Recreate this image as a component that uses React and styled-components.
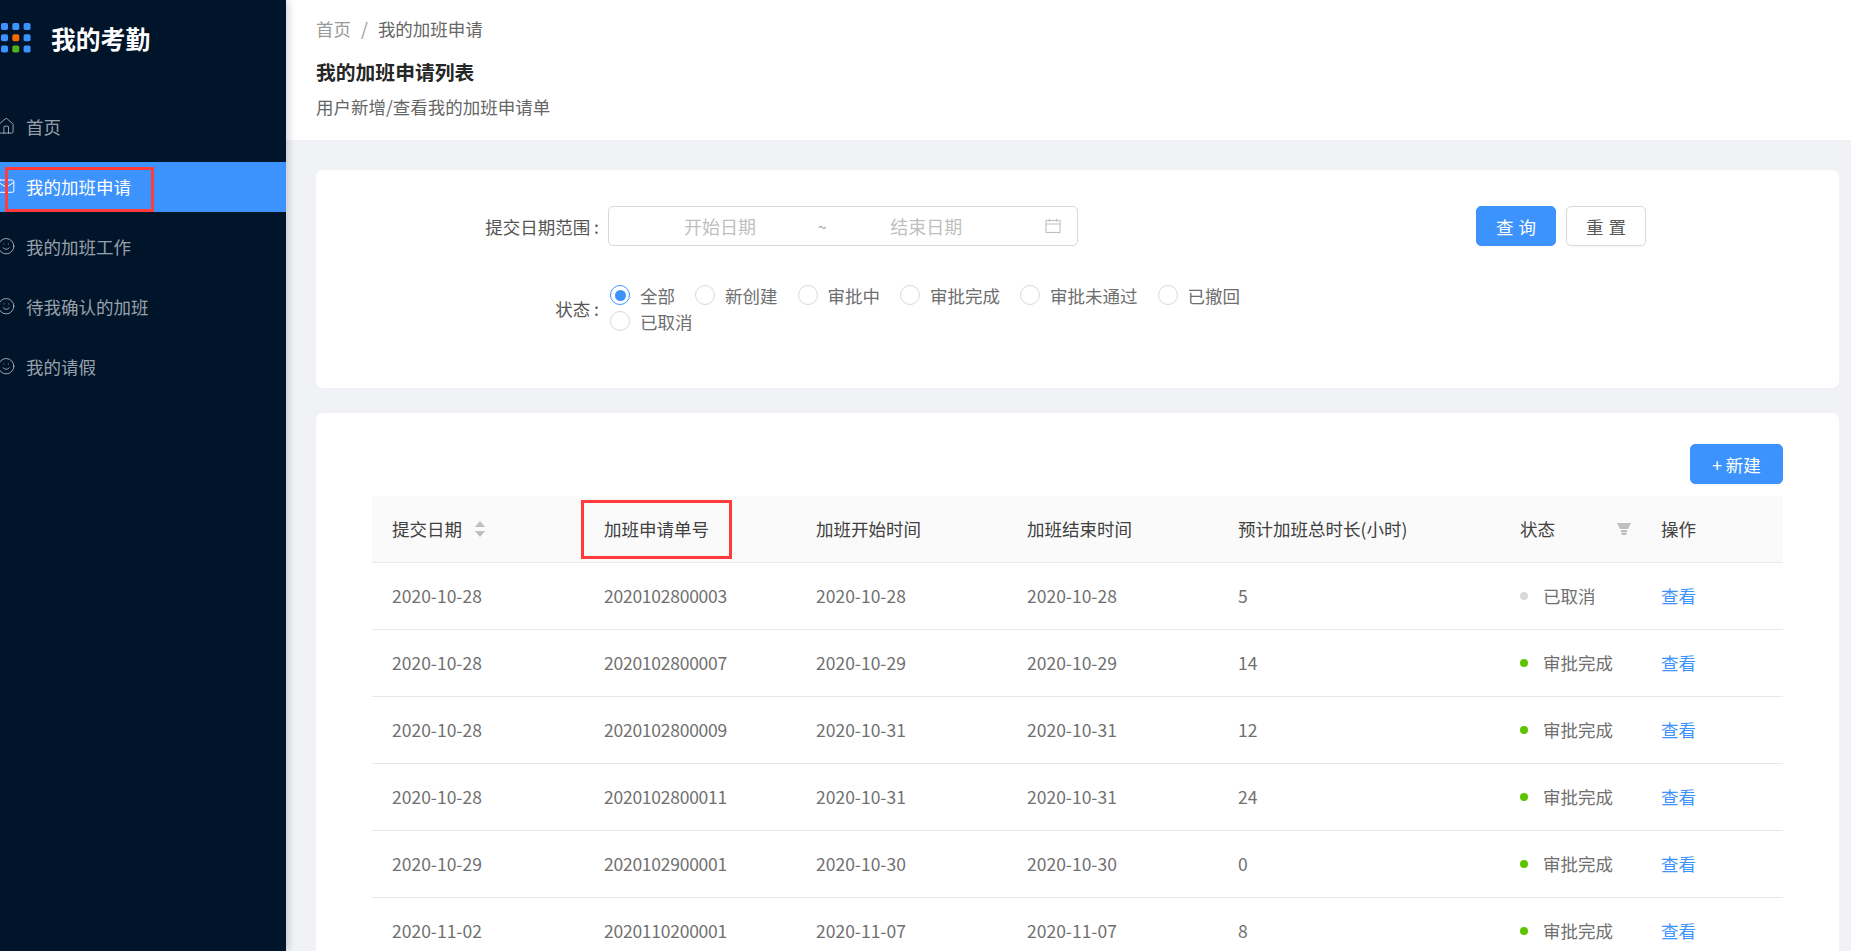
import React from "react";
import styled, { createGlobalStyle } from "styled-components";
import { House, Mail, Smile } from "lucide-react";

const GlobalStyle = createGlobalStyle`
  html, body {
    margin: 0;
    padding: 0;
    height: 100%;
    overflow: hidden;
    background: #f0f2f5;
    font-family: "Noto Sans CJK SC", "Noto Sans", sans-serif;
    font-size: 17.5px;
    color: #666;
  }
  * {
    box-sizing: border-box;
  }
`;

const menuItems = [
  { label: "首页", icon: House },
  { label: "我的加班申请", icon: Mail, active: true },
  { label: "我的加班工作", icon: Smile },
  { label: "待我确认的加班", icon: Smile },
  { label: "我的请假", icon: Smile },
];

const statusOptions = ["全部", "新创建", "审批中", "审批完成", "审批未通过", "已撤回", "已取消"];

const columnWidths = [212, 212, 211, 211, 282, 141, 142];

const rows = [
  ["2020-10-28", "2020102800003", "2020-10-28", "2020-10-28", "5", "已取消"],
  ["2020-10-28", "2020102800007", "2020-10-29", "2020-10-29", "14", "审批完成"],
  ["2020-10-28", "2020102800009", "2020-10-31", "2020-10-31", "12", "审批完成"],
  ["2020-10-28", "2020102800011", "2020-10-31", "2020-10-31", "24", "审批完成"],
  ["2020-10-29", "2020102900001", "2020-10-30", "2020-10-30", "0", "审批完成"],
  ["2020-11-02", "2020110200001", "2020-11-07", "2020-11-07", "8", "审批完成"],
];

const Layout = styled.div`
  display: flex;
  width: 100%;
  height: 100vh;
  overflow: hidden;
`;

const Sidebar = styled.aside`
  flex: 0 0 286px;
  background: #00142a;
  box-shadow: 2px 0 8px rgba(0, 21, 41, 0.2);
  position: relative;
  z-index: 2;
`;

const Brand = styled.div`
  display: flex;
  align-items: center;
  gap: 20px;
  height: 76px;
  padding-left: 1px;
`;

const BrandName = styled.div`
  font-size: 24.8px;
  font-weight: 700;
  color: #fff;
`;

const Menu = styled.nav`
  display: flex;
  flex-direction: column;
  gap: 10px;
  padding-top: 26px;
`;

const MenuItem = styled.div`
  position: relative;
  display: flex;
  align-items: center;
  gap: 10.6px;
  height: 50px;
  padding-bottom: 2px;
  background: ${(p) => (p.$active ? "#3d93fd" : "transparent")};
  color: ${(p) => (p.$active ? "#fff" : "rgba(255, 255, 255, 0.6)")};

  svg {
    flex: none;
    margin-left: -3px;
    width: 18.4px;
    height: 18.4px;
    stroke-width: 1.3;
  }
`;

const Highlight = styled.span`
  position: absolute;
  border: 3px solid #ff3b3b;
  pointer-events: none;
  left: ${(p) => p.$left}px;
  top: ${(p) => p.$top}px;
  width: ${(p) => p.$width}px;
  height: ${(p) => p.$height}px;
`;

const Main = styled.main`
  flex: 1;
  min-width: 0;
  display: flex;
  flex-direction: column;
`;

const PageHeader = styled.header`
  flex: 0 0 140px;
  padding: 16px 30px 0;
  background: #fff;
`;

const Breadcrumb = styled.div`
  display: flex;
  gap: 10px;
  line-height: 26px;
  color: #666;
`;

const Crumb = styled.span`
  color: ${(p) => (p.$muted ? "#999" : "#666")};
`;

const PageTitle = styled.h1`
  margin: 15px 0 0;
  font-size: 19.8px;
  line-height: 29px;
  font-weight: 700;
  color: #262626;
`;

const PageDesc = styled.div`
  margin-top: 8px;
  line-height: 26px;
  color: #666;
`;

const Content = styled.div`
  flex: 1;
  min-height: 0;
  display: flex;
  flex-direction: column;
  gap: 25px;
  padding: 30px 12px 0 30px;
`;

const Card = styled.section`
  background: #fff;
  border-radius: 7px;
`;

const FilterCard = styled(Card)`
  flex: none;
  padding: 36px 0 54px;
  display: flex;
  flex-direction: column;
  gap: 36px;
`;

const FormRow = styled.div`
  display: flex;
  align-items: center;
`;

const FormLabel = styled.label`
  flex: 0 0 283px;
  margin-right: 9px;
  text-align: right;
  color: #555;
`;

const RangePicker = styled.div`
  display: flex;
  align-items: center;
  width: 470px;
  height: 40px;
  padding-right: 16px;
  border: 1px solid #d9d9d9;
  border-radius: 5px;
  color: #bfbfbf;

  svg {
    margin-left: auto;
  }
`;

const RangeText = styled.span`
  flex: 0 0 ${(p) => p.$width}px;
  padding-left: ${(p) => p.$indent}px;
  font-size: 18px;
`;

const Tilde = styled.span`
  flex: 0 0 8px;
  font-size: 15px;
  color: #999;
`;

const Actions = styled.div`
  display: flex;
  gap: 10px;
  margin-left: 398px;
`;

const Button = styled.button`
  height: 40px;
  width: ${(p) => p.$width}px;
  padding: 0;
  border: 1px solid ${(p) => (p.$primary ? "#3d93fd" : "#d9d9d9")};
  border-radius: 5px;
  background: ${(p) => (p.$primary ? "#3d93fd" : "#fff")};
  color: ${(p) => (p.$primary ? "#fff" : "#595959")};
  box-shadow: 0 2px 0 rgba(0, 0, 0, 0.02);
  font: inherit;
  letter-spacing: ${(p) => (p.$spaced ? "5px" : "0")};
  text-indent: ${(p) => (p.$spaced ? "5px" : "0")};
`;

const RadioGroup = styled.div`
  display: flex;
  flex-wrap: wrap;
  width: 660px;
`;

const RadioItem = styled.span`
  display: flex;
  align-items: center;
  gap: 10px;
  height: 26px;
  margin: 0 18px 0 2px;
  color: #6e6e6e;
`;

const RadioDot = styled.span`
  width: 20px;
  height: 20px;
  border-radius: 50%;
  border: 1px solid ${(p) => (p.$checked ? "#3d93fd" : "#d9d9d9")};
  display: flex;
  align-items: center;
  justify-content: center;

  &::after {
    content: "";
    width: 11px;
    height: 11px;
    border-radius: 50%;
    background: ${(p) => (p.$checked ? "#3d93fd" : "transparent")};
  }
`;

const TableCard = styled(Card)`
  flex: none;
  padding: 31px 56px 0;
`;

const Toolbar = styled.div`
  display: flex;
  justify-content: flex-end;
  margin-bottom: 12px;
`;

const Table = styled.table`
  width: 100%;
  table-layout: fixed;
  border-collapse: collapse;
`;

const Th = styled.th`
  position: relative;
  height: 66px;
  padding: 0 20px;
  background: #fafafa;
  border-bottom: 1px solid #e8e8e8;
  text-align: left;
  font-weight: 400;
  color: #404040;
`;

const HeadInner = styled.div`
  display: flex;
  align-items: center;
  justify-content: ${(p) => (p.$spread ? "space-between" : "flex-start")};
  gap: 12px;
  margin-right: ${(p) => (p.$spread ? "-10px" : "0")};
`;

const Td = styled.td`
  height: 67px;
  padding: 0 20px;
  border-bottom: 1px solid #e8e8e8;
  color: #707070;
  letter-spacing: ${(p) => (p.$tight ? "-0.25px" : "0")};
`;

const StatusCell = styled.div`
  display: flex;
  align-items: center;
  gap: 15px;
`;

const StatusDot = styled.span`
  flex: none;
  width: 8px;
  height: 8px;
  border-radius: 50%;
  background: ${(p) => (p.$done ? "#5dc400" : "#d9d9d9")};
`;

const ViewLink = styled.a`
  color: #3d93fd;
`;

const LogoGrid = () => {
  const colors = ["#3d93fd", "#3d93fd", "#3d93fd", "#3d93fd", "#f56a00", "#3d93fd", "#3d93fd", "#52b01f", "#3d93fd"];
  return (
    <svg width="30" height="30" viewBox="0 0 30 30">
      {colors.map((c, i) => (
        <rect key={i} x={(i % 3) * 11.3} y={Math.floor(i / 3) * 11.3} width="7" height="7" rx="1.8" fill={c} />
      ))}
    </svg>
  );
};

const CalendarIcon = () => (
  <svg width="16" height="16" viewBox="0 0 16 16" fill="none" stroke="#bfbfbf" strokeWidth="1.1">
    <rect x="1" y="2.5" width="14" height="12" />
    <path d="M1 6h14M4.5 .8v3M11.5 .8v3" />
  </svg>
);

const SortIcon = () => (
  <svg width="12" height="18" viewBox="0 0 12 18" fill="#bfbfbf">
    <path d="M6 1l5 6H1zM6 17l-5-6h10z" />
  </svg>
);

const FilterIcon = () => (
  <svg width="14" height="14" viewBox="0 0 14 14" fill="#bfbfbf">
    <path d="M0 1h14l-3 6H3zM4 8h6v2H4zM4.5 10.5h5V13h-5z" />
  </svg>
);

const App = () => {
  return (
    <Layout>
      <GlobalStyle />
      <Sidebar>
        <Brand>
          <LogoGrid />
          <BrandName>我的考勤</BrandName>
        </Brand>
        <Menu>
          {menuItems.map(({ label, icon: Icon, active }) => (
            <MenuItem key={label} $active={active}>
              <Icon />
              {label}
              {active && <Highlight $left={5} $top={5} $width={149} $height={45} />}
            </MenuItem>
          ))}
        </Menu>
      </Sidebar>
      <Main>
        <PageHeader>
          <Breadcrumb>
            <Crumb $muted>首页</Crumb>
            <Crumb $muted>/</Crumb>
            <Crumb>我的加班申请</Crumb>
          </Breadcrumb>
          <PageTitle>我的加班申请列表</PageTitle>
          <PageDesc>用户新增/查看我的加班申请单</PageDesc>
        </PageHeader>
        <Content>
          <FilterCard>
            <FormRow>
              <FormLabel>提交日期范围 :</FormLabel>
              <RangePicker>
                <RangeText $width={209} $indent={75}>开始日期</RangeText>
                <Tilde>~</Tilde>
                <RangeText $width={142} $indent={64}>结束日期</RangeText>
                <CalendarIcon />
              </RangePicker>
              <Actions>
                <Button $primary $spaced $width={80}>查询</Button>
                <Button $spaced $width={80}>重置</Button>
              </Actions>
            </FormRow>
            <FormRow>
              <FormLabel>状态 :</FormLabel>
              <RadioGroup>
                {statusOptions.map((option, i) => (
                  <RadioItem key={option}>
                    <RadioDot $checked={i === 0} />
                    {option}
                  </RadioItem>
                ))}
              </RadioGroup>
            </FormRow>
          </FilterCard>
          <TableCard>
            <Toolbar>
              <Button $primary $width={93}>+ 新建</Button>
            </Toolbar>
            <Table>
              <colgroup>
                {columnWidths.map((w, i) => (
                  <col key={i} width={w} />
                ))}
              </colgroup>
              <thead>
                <tr>
                  <Th>
                    <HeadInner>
                      提交日期
                      <SortIcon />
                    </HeadInner>
                  </Th>
                  <Th>
                    加班申请单号
                    <Highlight $left={-3} $top={4} $width={151} $height={59} />
                  </Th>
                  <Th>加班开始时间</Th>
                  <Th>加班结束时间</Th>
                  <Th>预计加班总时长(小时)</Th>
                  <Th>
                    <HeadInner $spread>
                      状态
                      <FilterIcon />
                    </HeadInner>
                  </Th>
                  <Th>操作</Th>
                </tr>
              </thead>
              <tbody>
                {rows.map((row) => (
                  <tr key={row[1]}>
                    {row.slice(0, 5).map((cell, i) => (
                      <Td key={i} $tight={i === 1}>{cell}</Td>
                    ))}
                    <Td>
                      <StatusCell>
                        <StatusDot $done={row[5] === "审批完成"} />
                        {row[5]}
                      </StatusCell>
                    </Td>
                    <Td>
                      <ViewLink>查看</ViewLink>
                    </Td>
                  </tr>
                ))}
              </tbody>
            </Table>
          </TableCard>
        </Content>
      </Main>
    </Layout>
  );
};

export default App;
